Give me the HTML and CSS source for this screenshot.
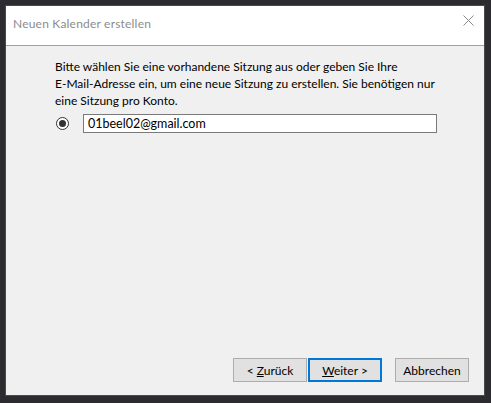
FILE: index.html
```html
<!DOCTYPE html>
<html lang="de">
<head>
  <meta charset="UTF-8" />
  <title>Neuen Kalender erstellen</title>
  <link rel="stylesheet" href="styles.css">
</head>
<body>
  <div class="dialog">
    <div class="titlebar">
      <span class="title">Neuen Kalender erstellen</span>
      <span class="close">
        <svg width="11" height="11" viewBox="0 0 11 11">
          <path d="M0.5 0.5 L10.5 10.5 M10.5 0.5 L0.5 10.5" stroke="#8a8a8a" stroke-width="1" fill="none" />
        </svg>
      </span>
    </div>

    <div class="content">
      <p class="intro">
        Bitte wählen Sie eine vorhandene Sitzung aus oder geben Sie Ihre<br>
        E-Mail-Adresse ein, um eine neue Sitzung zu erstellen. Sie benötigen nur<br>
        eine Sitzung pro Konto.
      </p>
      <div class="session">
        <span class="radio"><span class="dot"></span></span>
        <input type="text" class="email" value="01beel02@gmail.com" />
      </div>
    </div>

    <div class="footer">
      <button class="btn">&lt; <u>Z</u>urück</button>
      <button class="btn default"><u>W</u>eiter &gt;</button>
      <button class="btn cancel">Abbrechen</button>
    </div>
  </div>
</body>
</html>
```

FILE: styles.css
```css
body {
  margin: 0;
  padding: 5px;
  background: #2c2c30;
  font-family: Lato, "Open Sans", sans-serif;
  font-size: 12px;
  color: #000;
}
.dialog {
  width: 478px;
  height: 389px;
  border: 1px solid #4a4a4e;
  background: #f0f0f0;
  display: flex;
  flex-direction: column;
}
.titlebar {
  height: 39px;
  background: #fff;
  border-bottom: 1px solid #a0a0a0;
  display: flex;
  align-items: center;
  justify-content: space-between;
  padding: 0 10px 0 7px;
}
.title {
  color: #8c8c8c;
  font-size: 12px;
  letter-spacing: 0.2px;
  margin-top: -5px;
}
.close {
  display: flex;
  margin-top: -10px;
}
.content {
  flex: 1;
  padding: 12px 0 0 49px;
}
.intro {
  margin: 0;
  line-height: 17px;
}
.session {
  display: flex;
  align-items: center;
  margin-top: 5px;
}
.radio {
  width: 11px;
  height: 11px;
  border: 1px solid #333;
  border-radius: 50%;
  display: flex;
  align-items: center;
  justify-content: center;
  margin-left: 1px;
  background: #fff;
}
.dot {
  width: 7px;
  height: 7px;
  border-radius: 50%;
  background: #333;
}
.email {
  margin-left: 14px;
  width: 354px;
  height: 19px;
  box-sizing: border-box;
  border: 1px solid #7a7a7a;
  padding: 0 4px;
  font-family: inherit;
  font-size: 12.5px;
  background: #fff;
}
.footer {
  display: flex;
  justify-content: flex-end;
  padding: 0 15px 13px 0;
}
.btn {
  width: 74px;
  height: 24px;
  box-sizing: border-box;
  background: #e1e1e1;
  border: 1px solid #adadad;
  font-family: inherit;
  font-size: 12px;
  color: #000;
  padding: 0;
  margin-left: 1px;
}
.btn.default {
  border: 2px solid #0078d7;
}
.btn.cancel {
  margin-left: 13px;
}
```
